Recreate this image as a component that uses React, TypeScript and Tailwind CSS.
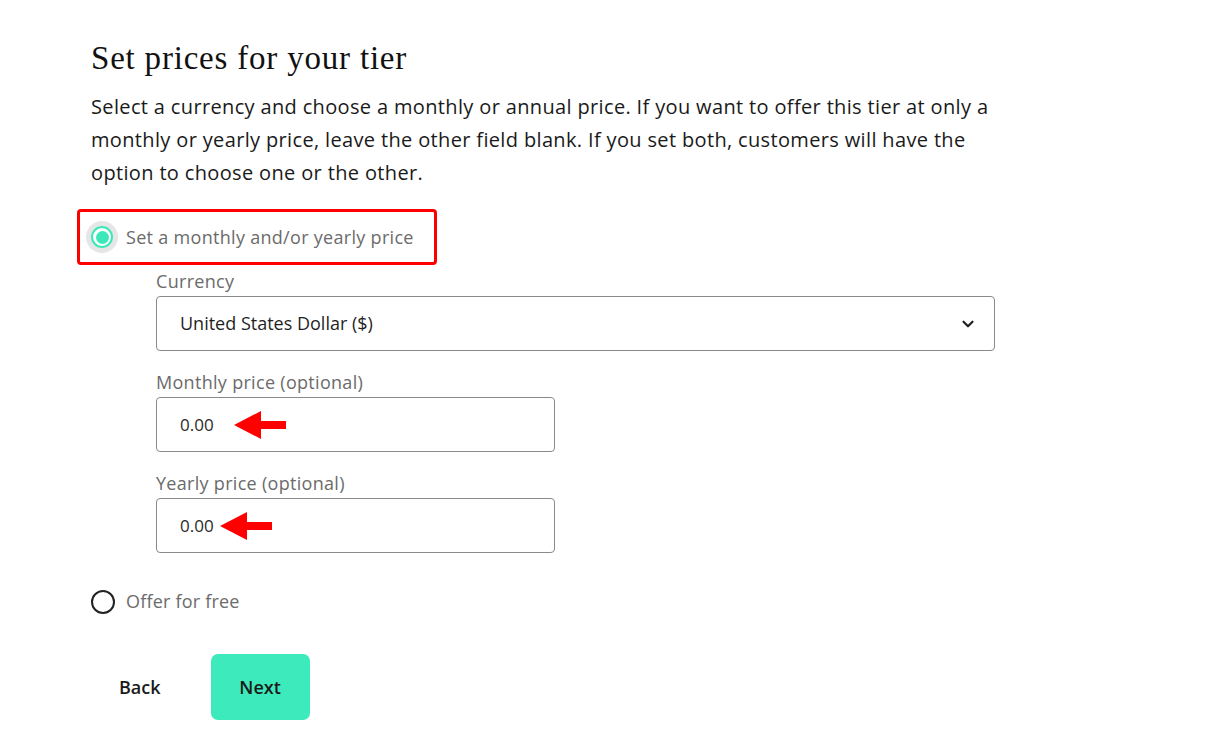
import { ChevronDown } from 'lucide-react';

const sans = { fontFamily: '"Open Sans", "Noto Sans", sans-serif' };

function Arrow() {
  return (
    <svg width="52" height="28" viewBox="0 0 52 28" className="shrink-0">
      <path d="M0 14 L27 0 L27 10 L52 10 L52 18 L27 18 L27 28 Z" fill="#ff0000" />
    </svg>
  );
}

function PriceInput({ label, arrowGap }: { label: string; arrowGap: string }) {
  return (
    <div className="flex flex-col">
      <label className="text-[18px] leading-[24px] tracking-[0.3px] text-[#6b6b6b]">{label}</label>
      <div className="mt-[3px] flex h-[55px] w-[399px] items-center rounded-[4px] border border-[#8a8a8a] pl-[23px]">
        <span className="text-[17px] text-[#2a2a2a]">0.00</span>
        <span className={arrowGap}>
          <Arrow />
        </span>
      </div>
    </div>
  );
}

export default function App() {
  return (
    <div className="min-h-screen bg-white pl-[91px] pt-[36px]" style={sans}>
      <h1
        className="text-[33px] leading-[44px] tracking-[0.8px] text-[#111]"
        style={{ fontFamily: '"Liberation Serif", serif' }}
      >
        Set prices for your tier
      </h1>
      <p className="mt-[10px] w-[910px] text-[20px] leading-[33px] tracking-[0.35px] text-[#1a1a1a]">
        Select a currency and choose a monthly or annual price. If you want to offer this tier at only a
        monthly or yearly price, leave the other field blank. If you set both, customers will have the
        option to choose one or the other.
      </p>

      <div className="ml-[-14px] mt-[20px] flex h-[56px] w-[360px] items-center rounded-[4px] border-[3px] border-[#ff0000] pl-[6px]">
        <span className="flex h-[32px] w-[32px] items-center justify-center rounded-full bg-[#e6e6e6]">
          <span className="flex h-[22px] w-[22px] items-center justify-center rounded-full border-2 border-[#3de8b8] bg-white">
            <span className="h-[13px] w-[13px] rounded-full bg-[#3de8b8]" />
          </span>
        </span>
        <span className="ml-[8px] text-[18px] tracking-[0.3px] text-[#6b6b6b]">
          Set a monthly and/or yearly price
        </span>
      </div>

      <div className="ml-[65px] mt-[4px] flex flex-col gap-[19px]">
        <div className="flex flex-col">
          <label className="text-[18px] leading-[24px] tracking-[0.3px] text-[#6b6b6b]">Currency</label>
          <div className="mt-[3px] flex h-[55px] w-[839px] items-center justify-between rounded-[4px] border border-[#8a8a8a] pl-[23px] pr-[17px]">
            <span className="text-[18px] text-[#1f1f1f]">United States Dollar ($)</span>
            <ChevronDown size={18} strokeWidth={3} className="text-[#222]" />
          </div>
        </div>
        <PriceInput label="Monthly price (optional)" arrowGap="ml-[20px]" />
        <PriceInput label="Yearly price (optional)" arrowGap="ml-[6px]" />
      </div>

      <div className="mt-[35px] flex items-center">
        <span className="h-[24px] w-[24px] rounded-full border-2 border-[#222]" />
        <span className="ml-[11px] text-[18px] tracking-[0.2px] text-[#6b6b6b]">Offer for free</span>
      </div>

      <div className="mt-[39px] flex items-center">
        <button className="ml-[28px] text-[18px] font-semibold text-[#1a1a1a]">Back</button>
        <button className="ml-[50px] h-[66px] w-[99px] rounded-[7px] bg-[#3deabc] text-[18px] font-semibold text-[#1a1a1a]">
          Next
        </button>
      </div>
    </div>
  );
}
